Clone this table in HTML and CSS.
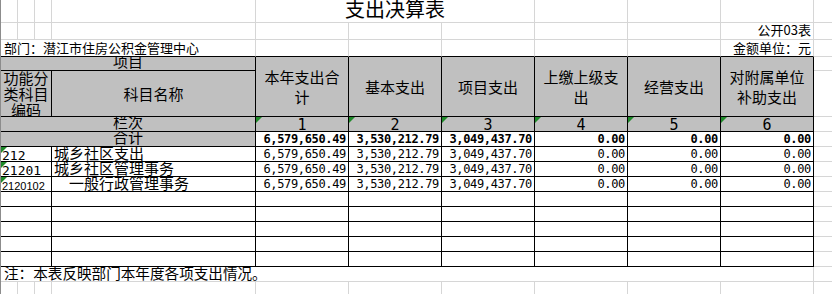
FILE: index.html
```html
<!DOCTYPE html>
<html lang="zh-CN">
<head>
<meta charset="utf-8">
<title>支出决算表</title>
<link rel="stylesheet" href="styles.css">
</head>
<body>
<div class="sheet">
  <!-- row 1 -->
  <div class="c"></div><div class="c"></div><div class="c"></div><div class="c"></div>
  <div class="c s3 title"><span>支出决算表</span></div>
  <div class="c"></div><div class="c"></div><div class="c"></div><div class="c"></div>
  <!-- row 2 -->
  <div class="c"></div><div class="c"></div><div class="c"></div><div class="c"></div><div class="c"></div>
  <div class="c"></div><div class="c"></div><div class="c"></div><div class="c"></div>
  <div class="c info right"><span>公开03表</span></div>
  <div class="c"></div>
  <!-- row 3 -->
  <div class="c s4 tt info dept"><span>部门：潜江市住房公积金管理中心</span></div>
  <div class="c tt"></div><div class="c tt"></div><div class="c tt"></div><div class="c tt"></div><div class="c tt"></div>
  <div class="c tt info right unit"><span>金额单位：元</span></div>
  <div class="c"></div>
  <!-- row 4 -->
  <div class="c s4 b g top"><span>项目</span></div>
  <div class="c r2 b g hd"><span>本年支出合计</span></div>
  <div class="c r2 b g hd"><span>基本支出</span></div>
  <div class="c r2 b g hd"><span>项目支出</span></div>
  <div class="c r2 b g hd"><span>上缴上级支出</span></div>
  <div class="c r2 b g hd"><span>经营支出</span></div>
  <div class="c r2 b g hd"><span>对附属单位补助支出</span></div>
  <div class="c"></div>
  <!-- row 5 -->
  <div class="c s3 b g hd code-hd"><span>功能分类科目编码</span></div>
  <div class="c b g hd"><span>科目名称</span></div>
  <div class="c"></div>
  <!-- row 6 -->
  <div class="c s4 b g lc"><span>栏次</span></div>
  <div class="c b g idx tri"><span>1</span></div>
  <div class="c b g idx tri"><span>2</span></div>
  <div class="c b g idx tri"><span>3</span></div>
  <div class="c b g idx tri"><span>4</span></div>
  <div class="c b g idx tri"><span>5</span></div>
  <div class="c b g idx tri"><span>6</span></div>
  <div class="c"></div>
  <!-- row 7 -->
  <div class="c s4 b g lc"><span>合计</span></div>
  <div class="c b num bold"><span>6,579,650.49</span></div>
  <div class="c b num bold"><span>3,530,212.79</span></div>
  <div class="c b num bold"><span>3,049,437.70</span></div>
  <div class="c b num bold"><span>0.00</span></div>
  <div class="c b num bold"><span>0.00</span></div>
  <div class="c b num bold"><span>0.00</span></div>
  <div class="c"></div>
  <!-- data row 1 -->
  <div class="c s3 b code tri"><span>212</span></div>
  <div class="c b name"><span>城乡社区支出</span></div>
  <div class="c b num"><span>6,579,650.49</span></div>
  <div class="c b num"><span>3,530,212.79</span></div>
  <div class="c b num"><span>3,049,437.70</span></div>
  <div class="c b num"><span>0.00</span></div>
  <div class="c b num"><span>0.00</span></div>
  <div class="c b num"><span>0.00</span></div>
  <div class="c"></div>
  <!-- data row 2 -->
  <div class="c s3 b code tri"><span>21201</span></div>
  <div class="c b name"><span>城乡社区管理事务</span></div>
  <div class="c b num"><span>6,579,650.49</span></div>
  <div class="c b num"><span>3,530,212.79</span></div>
  <div class="c b num"><span>3,049,437.70</span></div>
  <div class="c b num"><span>0.00</span></div>
  <div class="c b num"><span>0.00</span></div>
  <div class="c b num"><span>0.00</span></div>
  <div class="c"></div>
  <!-- data row 3 -->
  <div class="c s3 b code small tri"><span>2120102</span></div>
  <div class="c b name indent"><span>一般行政管理事务</span></div>
  <div class="c b num"><span>6,579,650.49</span></div>
  <div class="c b num"><span>3,530,212.79</span></div>
  <div class="c b num"><span>3,049,437.70</span></div>
  <div class="c b num"><span>0.00</span></div>
  <div class="c b num"><span>0.00</span></div>
  <div class="c b num"><span>0.00</span></div>
  <div class="c"></div>
  <!-- empty rows -->
  <div class="c s3 b"></div><div class="c b"></div><div class="c b"></div><div class="c b"></div><div class="c b"></div><div class="c b"></div><div class="c b"></div><div class="c b"></div><div class="c"></div>
  <div class="c s3 b"></div><div class="c b"></div><div class="c b"></div><div class="c b"></div><div class="c b"></div><div class="c b"></div><div class="c b"></div><div class="c b"></div><div class="c"></div>
  <div class="c s3 b"></div><div class="c b"></div><div class="c b"></div><div class="c b"></div><div class="c b"></div><div class="c b"></div><div class="c b"></div><div class="c b"></div><div class="c"></div>
  <div class="c s3 b"></div><div class="c b"></div><div class="c b"></div><div class="c b"></div><div class="c b"></div><div class="c b"></div><div class="c b"></div><div class="c b"></div><div class="c"></div>
  <div class="c s3 b"></div><div class="c b"></div><div class="c b"></div><div class="c b"></div><div class="c b"></div><div class="c b"></div><div class="c b"></div><div class="c b"></div><div class="c"></div>
  <!-- note row -->
  <div class="c s10 note"><span>注：本表反映部门本年度各项支出情况。</span></div>
  <div class="c"></div>
  <!-- last row -->
  <div class="c"></div><div class="c"></div><div class="c"></div><div class="c"></div><div class="c"></div>
  <div class="c"></div><div class="c"></div><div class="c"></div><div class="c"></div><div class="c"></div>
  <div class="c"></div>
</div>
</body>
</html>
```

FILE: styles.css
```css
html, body {
  margin: 0;
  padding: 0;
  background: #ffffff;
}

body {
  font-family: "Noto Sans CJK SC", "Noto Sans", sans-serif;
  color: #000000;
}

.sheet {
  display: grid;
  grid-template-columns: 17px 17px 17px 204px repeat(6, 93px) 40px;
  grid-template-rows: 23px 17px 17px 14px 46px 15px 15px repeat(8, 15px) 15px 15px;
  width: 831px;
  height: 294px;
  overflow: hidden;
  border-left: 1px solid #8c8c8c;
}

.c {
  box-sizing: border-box;
  border-right: 1px solid #d6d6d6;
  border-bottom: 1px solid #d6d6d6;
  overflow: hidden;
  min-width: 0;
  min-height: 0;
  position: relative;
  display: flex;
  align-items: flex-start;
  white-space: nowrap;
}

.s3 { grid-column: span 3; }
.s4 { grid-column: span 4; }
.s10 { grid-column: span 10; }
.r2 { grid-row: span 2; }

.tt { border-bottom-color: #000000; }
.b { border-right-color: #000000; border-bottom-color: #000000; }
.g { background: #c0c0c0; }

.title {
  justify-content: center;
  font-size: 20px;
  line-height: 18px;
}

.info {
  font-size: 13px;
  line-height: 14px;
}
.dept { padding-left: 3px; line-height: 15px; }
.unit { line-height: 15px; }
.right { justify-content: flex-end; padding-right: 2px; }

.top {
  justify-content: center;
  font-size: 15px;
  line-height: 8px;
}

.hd {
  justify-content: center;
  align-items: center;
  text-align: center;
  white-space: normal;
  font-size: 15px;
  line-height: 20px;
  padding: 0 6px;
}
.code-hd {
  padding: 0;
  line-height: 16px;
}

.lc {
  justify-content: center;
  font-size: 15px;
  line-height: 10px;
}

.idx {
  justify-content: center;
  font-family: "DejaVu Sans Mono", monospace;
  font-size: 15px;
  line-height: 16px;
}

.num {
  justify-content: flex-end;
  padding-right: 2px;
  font-family: "DejaVu Sans Mono", monospace;
  font-size: 12px;
  letter-spacing: -0.35px;
  line-height: 15px;
}
.bold { font-weight: bold; }

.code {
  padding-left: 1px;
  font-family: "DejaVu Sans Mono", monospace;
  font-size: 13px;
  line-height: 17px;
}
.code.small {
  font-family: "Liberation Sans", Arial, sans-serif;
  font-size: 11px;
  line-height: 18px;
}

.name {
  padding-left: 2px;
  font-size: 15px;
  line-height: 11px;
}
.indent { padding-left: 17px; }

.note {
  padding-left: 3px;
  font-size: 14.6px;
  line-height: 11px;
}

.tri::before {
  content: "";
  position: absolute;
  top: 0;
  left: 0;
  width: 0;
  height: 0;
  border-top: 6px solid #1f8a2a;
  border-right: 6px solid transparent;
}
```
